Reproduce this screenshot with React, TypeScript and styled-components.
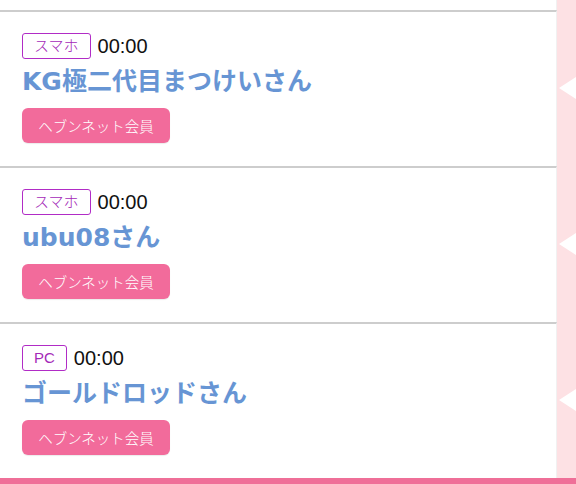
import React from "react";
import styled, { createGlobalStyle } from "styled-components";

const GlobalStyle = createGlobalStyle`
  html, body {
    margin: 0;
    padding: 0;
    background: #ffffff;
    overflow: hidden;
  }
  body {
    font-family: "Noto Sans CJK JP", "Noto Sans", sans-serif;
  }
`;

const Page = styled.div`
  width: 576px;
  height: 484px;
  display: flex;
  flex-direction: column;
  overflow: hidden;
`;

const Row = styled.div<{ $height?: number }>`
  display: grid;
  grid-template-columns: 1fr 19px;
  ${({ $height }) => ($height ? `height: ${$height}px;` : "")}
`;

const Side = styled.div`
  background: #fde1e4;
  display: flex;
  align-items: center;
  justify-content: flex-end;
`;

const Arrow = styled.span`
  width: 0;
  height: 0;
  border-top: 11px solid transparent;
  border-bottom: 11px solid transparent;
  border-right: 17px solid #ffffff;
`;

const Item = styled.div`
  border-top: 2px solid #cdcdcd;
  border-right: 1px solid #f1f1f1;
  padding: 21px 22px 23px;
  display: flex;
  flex-direction: column;
  align-items: flex-start;
`;

const Meta = styled.div`
  display: flex;
  align-items: center;
  gap: 7px;
  height: 26px;
`;

const Device = styled.span`
  box-sizing: border-box;
  height: 26px;
  padding: 0 11px;
  border: 1.5px solid #b12cc6;
  border-radius: 3px;
  color: #a42ab8;
  font-size: 15px;
  font-weight: 300;
  line-height: 23px;
  font-family: "Liberation Sans", "Noto Sans CJK JP", sans-serif;
`;

const Time = styled.span`
  font-family: "Liberation Sans", Arial, sans-serif;
  font-size: 20px;
  color: #111111;
  line-height: 26px;
`;

const Name = styled.div`
  margin-top: 8px;
  height: 30px;
  line-height: 30px;
  font-size: 25px;
  font-weight: 700;
  color: #6795d4;
  font-family: "DejaVu Sans", "Noto Sans CJK JP", sans-serif;
  white-space: nowrap;
`;

const MemberButton = styled.span`
  margin-top: 11px;
  box-sizing: border-box;
  height: 35px;
  width: 148px;
  display: flex;
  align-items: center;
  justify-content: center;
  background: #f26b9b;
  color: #ffffff;
  border-radius: 6px;
  font-size: 14.5px;
  font-weight: 300;
  box-shadow: 0 1px 1px rgba(0, 0, 0, 0.08);
`;

const BottomBar = styled.div`
  height: 6px;
  background: #ef6f98;
`;

const Tail = styled.div`
  border-right: 1px solid #f1f1f1;
`;

const users = [
  { device: "スマホ", time: "00:00", name: "KG極二代目まつけいさん" },
  { device: "スマホ", time: "00:00", name: "ubu08さん" },
  { device: "PC", time: "00:00", name: "ゴールドロッドさん" },
];

export default function App() {
  return (
    <>
      <GlobalStyle />
      <Page>
        <Row $height={10}>
          <Tail />
          <Side />
        </Row>
        {users.map((u, i) => (
          <Row key={i}>
            <Item>
              <Meta>
                <Device>{u.device}</Device>
                <Time>{u.time}</Time>
              </Meta>
              <Name>{u.name}</Name>
              <MemberButton>ヘブンネット会員</MemberButton>
            </Item>
            <Side>
              <Arrow />
            </Side>
          </Row>
        ))}
        <BottomBar />
      </Page>
    </>
  );
}
